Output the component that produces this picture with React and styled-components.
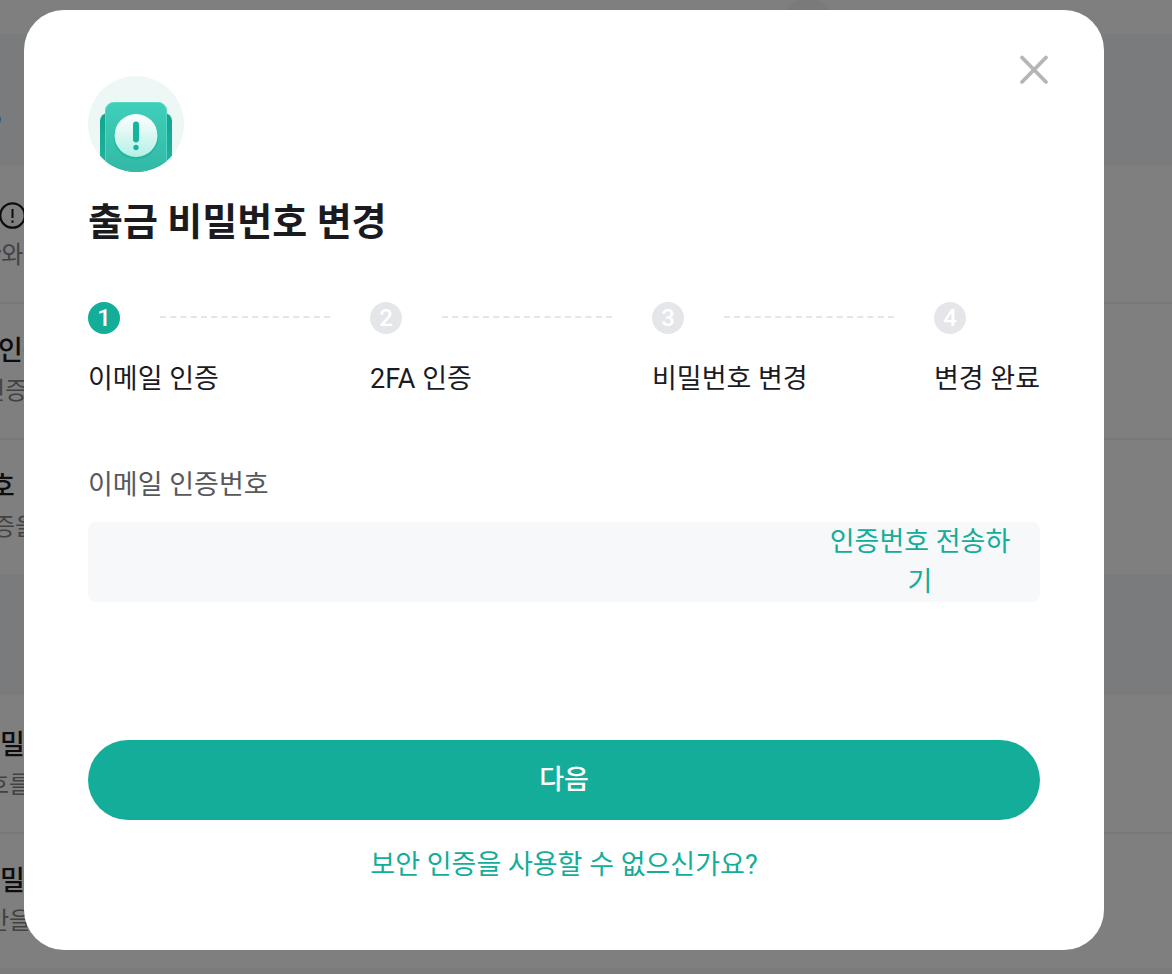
import React, { useState } from 'react';
import styled, { createGlobalStyle } from 'styled-components';

const GlobalStyle = createGlobalStyle`
  * {
    box-sizing: border-box;
  }

  body {
    margin: 0;
    font-family: Roboto, 'Noto Sans CJK KR', sans-serif;
    color: #1b1b1f;
  }

  button,
  input {
    font-family: inherit;
    border: none;
    background: none;
    padding: 0;
  }
`;

const Screen = styled.div`
  display: grid;
  grid-template-columns: minmax(0, 1fr);
  min-height: 100vh;
  overflow: hidden;
`;

//////////////////////////////////////////////////
// Settings page behind the dialog

const Page = styled.div`
  grid-area: 1 / 1;
  height: 100%;
  background: #f5f6f9;
`;

const TopBar = styled.div`
  height: 34px;
  padding-left: 67%;
  background: #fff;
`;

const Tab = styled.div`
  width: 46px;
  height: 34px;
  background: #f4f5f7;
  border-radius: 16px;
`;

const Band = styled.div`
  display: flex;
  align-items: center;
  height: ${props => props.$height};
  padding-top: 36px;
`;

const List = styled.div`
  padding-top: 3px;
  background: #fff;
`;

const Row = styled.div`
  padding: 27px 0;
  border-bottom: 2px solid #f0f1f3;

  &:last-child {
    border-bottom: none;
  }
`;

const RowText = styled.div`
  height: 40px;
  line-height: 40px;
  white-space: nowrap;
  text-indent: ${props => props.$indent};
`;

const RowTitle = styled(RowText)`
  font-size: 27px;
  font-weight: 500;
`;

const RowNote = styled(RowText)`
  font-size: 24px;
  color: #85858a;
`;

const NoticeIcon = styled.svg`
  display: block;
  width: 28px;
  height: 40px;
`;

//////////////////////////////////////////////////
// Dialog

const Overlay = styled.div`
  grid-area: 1 / 1;
  display: flex;
  align-items: flex-start;
  padding: 10px 68px 24px 24px;
  background: rgba(0, 0, 0, 0.5);
`;

const Modal = styled.div`
  flex: 1;
  min-width: 0;
  padding: 40px 64px 65px;
  background: #fff;
  border-radius: 40px;
`;

const ModalHeader = styled.div`
  display: flex;
  justify-content: space-between;
  align-items: flex-start;
`;

const Badge = styled.svg`
  display: block;
  width: 96px;
  height: 96px;
  margin-top: 26px;
`;

const CloseButton = styled.button`
  width: 40px;
  height: 40px;
  margin-right: -14px;
  cursor: pointer;

  svg {
    display: block;
  }
`;

const Title = styled.h1`
  margin: 22px 0 0;
  font-size: 38px;
  font-weight: 700;
  line-height: 56px;
`;

const Steps = styled.ol`
  display: flex;
  margin: 52px 0 0;
  padding: 0;
  list-style: none;
`;

const Step = styled.li`
  flex: 1;

  &:last-child {
    flex: none;
  }
`;

const StepTop = styled.div`
  display: flex;
  align-items: center;
  gap: 40px;
  padding-right: 40px;
`;

const StepNumber = styled.span`
  width: 32px;
  height: 32px;
  border-radius: 50%;
  background: ${props => (props.$active ? '#13ad99' : '#e5e6ea')};
  color: #fff;
  font-size: 24px;
  font-weight: 500;
  line-height: 32px;
  text-align: center;
`;

const StepLine = styled.span`
  flex: 1;
  height: 4px;
  border-top: 2px dashed #e5e5e7;
`;

const StepLabel = styled.div`
  margin-top: 25px;
  font-size: 27px;
  line-height: 40px;
  white-space: nowrap;
`;

const FieldLabel = styled.label`
  display: block;
  margin-top: 66px;
  font-size: 27px;
  line-height: 40px;
  color: #58585c;
`;

const Field = styled.div`
  display: flex;
  height: 80px;
  margin-top: 17px;
  padding: 0 28px;
  background: #f7f8fa;
  border-radius: 8px;
`;

const CodeInput = styled.input`
  flex: 1;
  min-width: 0;
  font-size: 27px;
  outline: none;
`;

const SendButton = styled.button`
  width: 184px;
  font-size: 27px;
  line-height: 40px;
  color: #13ad99;
  cursor: pointer;
`;

const NextButton = styled.button`
  display: block;
  width: 100%;
  height: 80px;
  margin-top: 138px;
  border-radius: 40px;
  background: #13ad99;
  color: #fff;
  font-size: 27px;
  font-weight: 500;
  line-height: 40px;
  cursor: pointer;
`;

const HelpLink = styled.a`
  display: block;
  width: fit-content;
  margin: 25px auto 0;
  font-size: 27px;
  line-height: 40px;
  color: #13ad99;
  text-decoration: none;
`;

const steps = ['이메일 인증', '2FA 인증', '비밀번호 변경', '변경 완료'];

const SettingsPage = () => (
  <Page aria-hidden='true'>
    <TopBar>
      <Tab />
    </TopBar>
    <Band $height='131px'>
      <RowTitle $indent='-14px'>o</RowTitle>
    </Band>
    <List>
      <Row>
        <NoticeIcon viewBox='0 0 28 40' fill='none' stroke='#1b1b1f'>
          <circle cx='12.5' cy='20.5' r='12.2' strokeWidth='2.2' />
          <path d='M12.5 14v9' strokeWidth='2' />
          <path d='M12.5 25.5v2.2' strokeWidth='2.2' />
        </NoticeIcon>
        <RowNote $indent='-10px'>y와</RowNote>
      </Row>
      <Row>
        <RowTitle $indent='-2px'>인증</RowTitle>
        <RowNote $indent='-17px'>인증</RowNote>
      </Row>
      <Row>
        <RowTitle $indent='-10px'>호</RowTitle>
        <RowNote $indent='-7px'>증을</RowNote>
      </Row>
    </List>
    <Band $height='121px' />
    <List>
      <Row>
        <RowTitle $indent='0px'>밀</RowTitle>
        <RowNote $indent='-13px'>호를</RowNote>
      </Row>
      <Row>
        <RowTitle $indent='0px'>밀</RowTitle>
        <RowNote $indent='-13px'>안을</RowNote>
      </Row>
    </List>
  </Page>
);

const SecurityBadge = () => (
  <Badge viewBox='0 0 96 96' aria-hidden='true'>
    <defs>
      <clipPath id='badge-clip'>
        <circle cx='48' cy='48' r='48' />
      </clipPath>
      <linearGradient id='badge-body' x1='0' y1='0' x2='0' y2='1'>
        <stop offset='0' stopColor='#3fd0ba' />
        <stop offset='1' stopColor='#31b5a2' />
      </linearGradient>
      <linearGradient id='badge-side' x1='0' y1='0' x2='0' y2='1'>
        <stop offset='0' stopColor='#0fa590' />
        <stop offset='1' stopColor='#2ab6a2' />
      </linearGradient>
      <linearGradient id='badge-dial' x1='0' y1='0' x2='0' y2='1'>
        <stop offset='0' stopColor='#ffffff' />
        <stop offset='1' stopColor='#b4f0e5' />
      </linearGradient>
    </defs>
    <g clipPath='url(#badge-clip)'>
      <rect width='96' height='96' fill='#edf8f6' />
      <rect x='12' y='37' width='72' height='70' rx='8' fill='url(#badge-side)' />
      <rect x='17' y='26' width='62' height='80' rx='9' fill='url(#badge-body)' />
      <path
        d='M17.5 96V35a8.5 8.5 0 0 1 8.5-8.5h44a8.5 8.5 0 0 1 8.5 8.5v61'
        fill='none'
        stroke='#63dccb'
        strokeOpacity='0.7'
      />
      <circle cx='48' cy='61' r='22.5' fill='#14b39d' opacity='0.6' />
      <circle cx='48' cy='59.5' r='21.5' fill='url(#badge-dial)' />
      <rect x='45' y='45.5' width='6' height='21' rx='3' fill='#14b5a0' />
      <circle cx='48' cy='71.5' r='2.7' fill='#14b5a0' />
    </g>
  </Badge>
);

export default function App() {
  const [code, setCode] = useState('');

  return (
    <>
      <GlobalStyle />
      <Screen>
        <SettingsPage />
        <Overlay>
          <Modal role='dialog' aria-modal='true' aria-labelledby='modal-title'>
            <ModalHeader>
              <SecurityBadge />
              <CloseButton type='button' aria-label='닫기'>
                <svg width='40' height='40' viewBox='0 0 40 40'>
                  <path
                    d='M8 7.5l24 24.5M32 7.5L8 32'
                    stroke='#b5b5b5'
                    strokeWidth='3.8'
                    strokeLinecap='round'
                  />
                </svg>
              </CloseButton>
            </ModalHeader>
            <Title id='modal-title'>출금 비밀번호 변경</Title>

            <Steps>
              {steps.map((label, index) => (
                <Step key={label}>
                  <StepTop>
                    <StepNumber $active={index === 0}>{index + 1}</StepNumber>
                    {index < steps.length - 1 && <StepLine />}
                  </StepTop>
                  <StepLabel>{label}</StepLabel>
                </Step>
              ))}
            </Steps>

            <form onSubmit={e => e.preventDefault()}>
              <FieldLabel htmlFor='email-code'>이메일 인증번호</FieldLabel>
              <Field>
                <CodeInput
                  id='email-code'
                  type='text'
                  autoComplete='one-time-code'
                  value={code}
                  onChange={e => setCode(e.target.value)}
                />
                <SendButton type='button'>인증번호 전송하기</SendButton>
              </Field>
              <NextButton type='submit'>다음</NextButton>
            </form>
            <HelpLink href='#help'>보안 인증을 사용할 수 없으신가요?</HelpLink>
          </Modal>
        </Overlay>
      </Screen>
    </>
  );
}
